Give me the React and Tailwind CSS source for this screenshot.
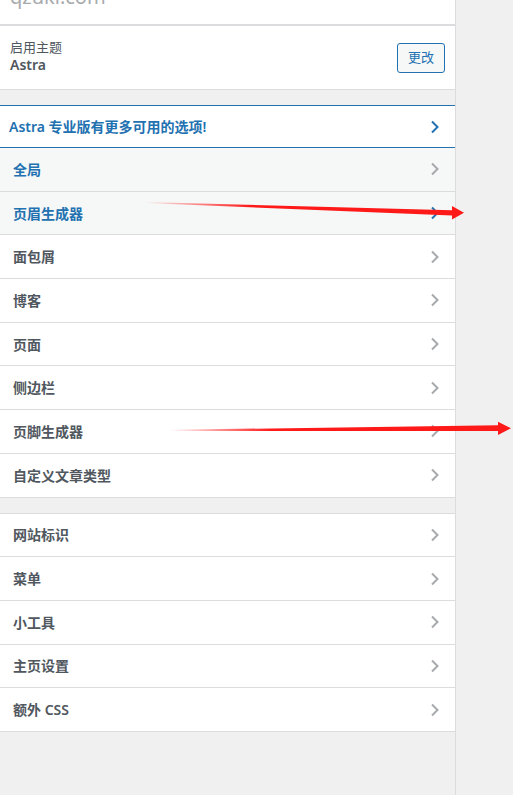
import React from 'react';

const Chevron = ({ className }) => (
  <svg viewBox="0 0 10 14" className={className} fill="none" stroke="currentColor" strokeWidth="2">
    <path d="M2 1.5 L7.5 7 L2 12.5" />
  </svg>
);

const Row = ({ label, active, blue, blueChevron }) => (
  <div
    className={`flex h-[43.7px] items-center justify-between border-b border-[#dcdcde] pl-[13px] pr-[15px] ${
      active ? 'bg-[#f6f7f7]' : 'bg-white'
    }`}
  >
    <span className={`text-[14px] font-semibold ${blue ? 'text-[#2271b1]' : 'text-[#50575e]'}`}>{label}</span>
    <Chevron className={`h-[14px] w-[10px] ${blueChevron ? 'text-[#2271b1]' : 'text-[#a7aaad]'}`} />
  </div>
);

const groupOne = [
  { label: '全局', active: true, blue: true },
  { label: '页眉生成器', active: true, blue: true, blueChevron: true },
  { label: '面包屑' },
  { label: '博客' },
  { label: '页面' },
  { label: '侧边栏' },
  { label: '页脚生成器' },
  { label: '自定义文章类型' },
];

const groupTwo = ['网站标识', '菜单', '小工具', '主页设置', '额外 CSS'];

export default function App() {
  return (
    <div
      className="relative flex h-[795px] w-[513px] overflow-hidden bg-[#f0f0f0]"
      style={{ fontFamily: '"Noto Sans", "Noto Sans CJK SC", sans-serif' }}
    >
      {/* Customizer panel */}
      <div className="flex w-[456px] flex-col border-r border-[#dcdcde]">
        <div className="h-[26px] overflow-hidden border-b-2 border-[#dcdcde] bg-white px-[10px]">
          <div className="-mt-[17px] text-[20px] leading-[28px] text-[#a7aaad]">qzuki.com</div>
        </div>

        <div className="flex h-[64px] items-center justify-between border-b border-[#dcdcde] bg-white pl-[10px] pr-[10px]">
          <div className="flex flex-col pb-[4px] leading-[18px]">
            <span className="text-[13px] text-[#50575e]">启用主题</span>
            <span className="text-[14px] font-semibold text-[#50575e]">Astra</span>
          </div>
          <button className="flex h-[30px] w-[48px] items-center justify-center rounded-[3px] border border-[#2271b1] bg-[#f6f7f7] text-[13px] text-[#2271b1]">
            更改
          </button>
        </div>

        <div className="h-[15px]" />

        <div className="flex h-[43px] items-center justify-between border-y border-[#2271b1] bg-white pl-[9px] pr-[15px]">
          <span className="text-[14px] font-semibold text-[#2271b1]">Astra 专业版有更多可用的选项!</span>
          <Chevron className="h-[14px] w-[10px] text-[#2271b1]" />
        </div>

        <div>
          {groupOne.map((item) => (
            <Row key={item.label} {...item} />
          ))}
        </div>

        <div className="h-[15px]" />

        <div className="border-t border-[#dcdcde]">
          {groupTwo.map((label) => (
            <Row key={label} label={label} />
          ))}
        </div>
      </div>

      {/* Annotation arrows */}
      <svg className="pointer-events-none absolute left-0 top-0" width="513" height="795" viewBox="0 0 513 795">
        <defs>
          <linearGradient id="fade1" gradientUnits="userSpaceOnUse" x1="145" y1="0" x2="250" y2="0">
            <stop offset="0" stopColor="#ff1a1a" stopOpacity="0" />
            <stop offset="1" stopColor="#ff1a1a" stopOpacity="1" />
          </linearGradient>
          <linearGradient id="fade2" gradientUnits="userSpaceOnUse" x1="170" y1="0" x2="270" y2="0">
            <stop offset="0" stopColor="#ff1a1a" stopOpacity="0" />
            <stop offset="1" stopColor="#ff1a1a" stopOpacity="1" />
          </linearGradient>
        </defs>
        <polygon points="145,202 452,210.2 452,206 464,212.8 452,219.4 452,215.4 145,203" fill="url(#fade1)" />
        <polygon points="170,429.8 498,425.3 498,421.8 511,428.3 498,435 498,430.9 170,431" fill="url(#fade2)" />
      </svg>
    </div>
  );
}
